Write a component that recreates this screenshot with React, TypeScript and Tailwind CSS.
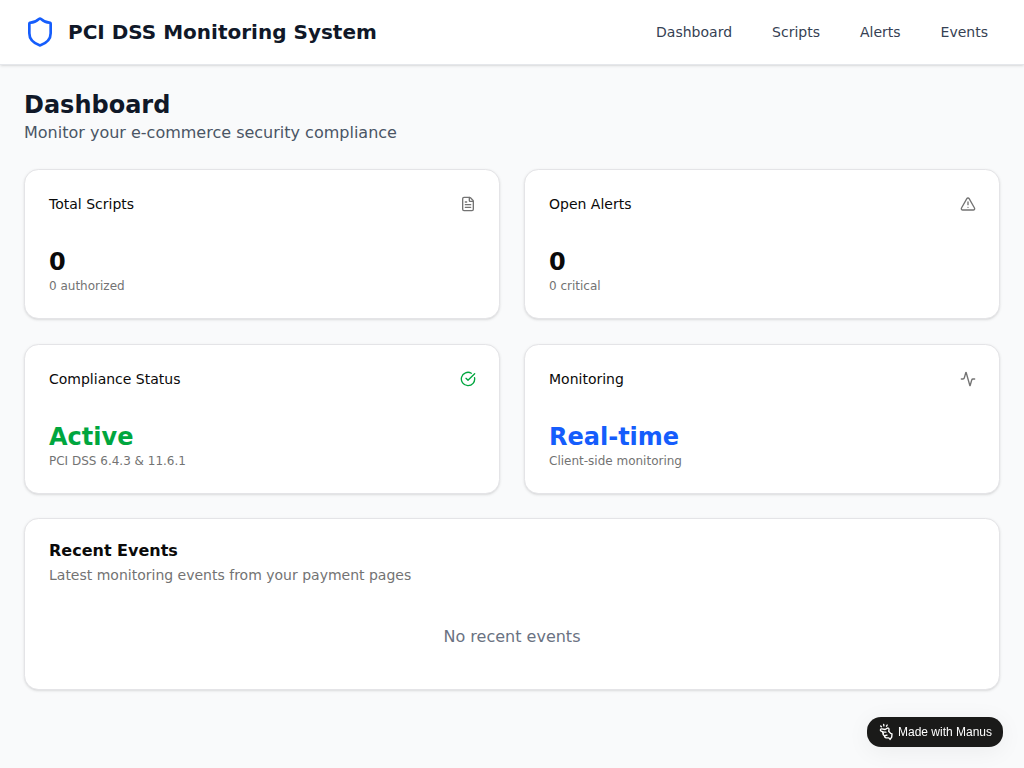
import type { ReactNode } from "react";
import { Activity, CircleCheckBig, FileText, Shield, TriangleAlert } from "lucide-react";

const navItems = ["Dashboard", "Scripts", "Alerts", "Events"];

interface StatProps {
  title: string;
  icon: ReactNode;
  value: string;
  valueClass?: string;
  note: string;
}

function StatCard({ title, icon, value, valueClass = "", note }: StatProps) {
  return (
    <div className="flex flex-col gap-6 rounded-[14.4px] border border-[#e4e4e7] bg-white py-6 shadow-sm">
      <div className="flex items-center justify-between pr-[23.5px] pb-2 pl-6">
        <div className="text-sm font-medium">{title}</div>
        {icon}
      </div>
      <div className="px-6">
        <div className={`text-2xl font-bold ${valueClass}`}>{value}</div>
        <p className="text-xs text-[#737373]">{note}</p>
      </div>
    </div>
  );
}

function ManusMark() {
  return (
    <svg className="shrink-0" width="15" height="18" viewBox="0 0 15 18" fill="none" stroke="white" strokeWidth="1.4" strokeLinecap="round" strokeLinejoin="round">
      <path d="M2.4 3.8 1.7 3M4.9 2.8 4.7 1.5M7.5 3.2 8.2 2" />
      <path d="M4.2 9 2.1 8.1C.9 7.3 1.4 5.7 2.8 5.9L6.1 6.5 8 5.3C9.2 4.6 10.3 5.4 10 6.6L9.7 8.3 11.6 10.4 13 10.8 12.7 14.2 11.1 16.4 9.8 14.9 7 14.7C5.7 14.5 5.2 13.5 5.7 12.7 4.2 12.3 3.7 11.3 4.4 10.5 3.5 10 3.4 9.3 4.2 9L6.9 9.1M5.7 12.7 8 12.1" />
    </svg>
  );
}

export default function App() {
  return (
    <div className="min-h-screen bg-gray-50 font-['DejaVu_Sans',sans-serif] text-[#0a0a0a]">
      <nav className="border-b border-gray-200 bg-white shadow-sm">
        <div className="flex h-16 items-center justify-between px-6">
          <div className="flex items-center gap-3">
            <Shield className="size-8 text-blue-600" />
            <span className="text-xl font-bold text-gray-900">PCI DSS Monitoring System</span>
          </div>
          <div className="flex gap-4">
            {navItems.map((n) => (
              <a key={n} className="px-3 py-2 text-sm font-medium text-gray-700">{n}</a>
            ))}
          </div>
        </div>
      </nav>
      <main className="flex flex-col gap-6 p-6">
        <div>
          <h1 className="text-2xl font-bold text-gray-900">Dashboard</h1>
          <p className="text-gray-600">Monitor your e-commerce security compliance</p>
        </div>
        <div className="grid grid-cols-2 gap-x-6 gap-y-[24.5px]">
          <StatCard title="Total Scripts" icon={<FileText className="size-4 text-[#737373]" />} value="0" note="0 authorized" />
          <StatCard title="Open Alerts" icon={<TriangleAlert className="size-4 text-[#737373]" />} value="0" note="0 critical" />
          <StatCard title="Compliance Status" icon={<CircleCheckBig className="size-4 text-green-600" />} value="Active" valueClass="text-green-600" note="PCI DSS 6.4.3 & 11.6.1" />
          <StatCard title="Monitoring" icon={<Activity className="size-4 text-[#737373]" />} value="Real-time" valueClass="text-blue-600" note="Client-side monitoring" />
        </div>
        <section className="flex flex-col gap-6 rounded-[14.4px] border border-[#e4e4e7] bg-white py-6 shadow-sm">
          <div className="flex flex-col gap-1.5 px-6">
            <h2 className="leading-none font-semibold">Recent Events</h2>
            <p className="text-sm text-[#737373]">Latest monitoring events from your payment pages</p>
          </div>
          <div className="px-6">
            <p className="py-4 text-center text-gray-500">No recent events</p>
          </div>
        </section>
      </main>
      <div className="fixed right-[21px] bottom-[21px] flex h-[30px] w-[136px] items-center gap-1 rounded-[14px] bg-[#1a1a19] pl-3 font-['Liberation_Sans',sans-serif] text-xs text-white shadow-[0_4px_24px_rgba(0,0,0,0.06)]">
        <ManusMark />
        <span>Made with Manus</span>
      </div>
    </div>
  );
}
